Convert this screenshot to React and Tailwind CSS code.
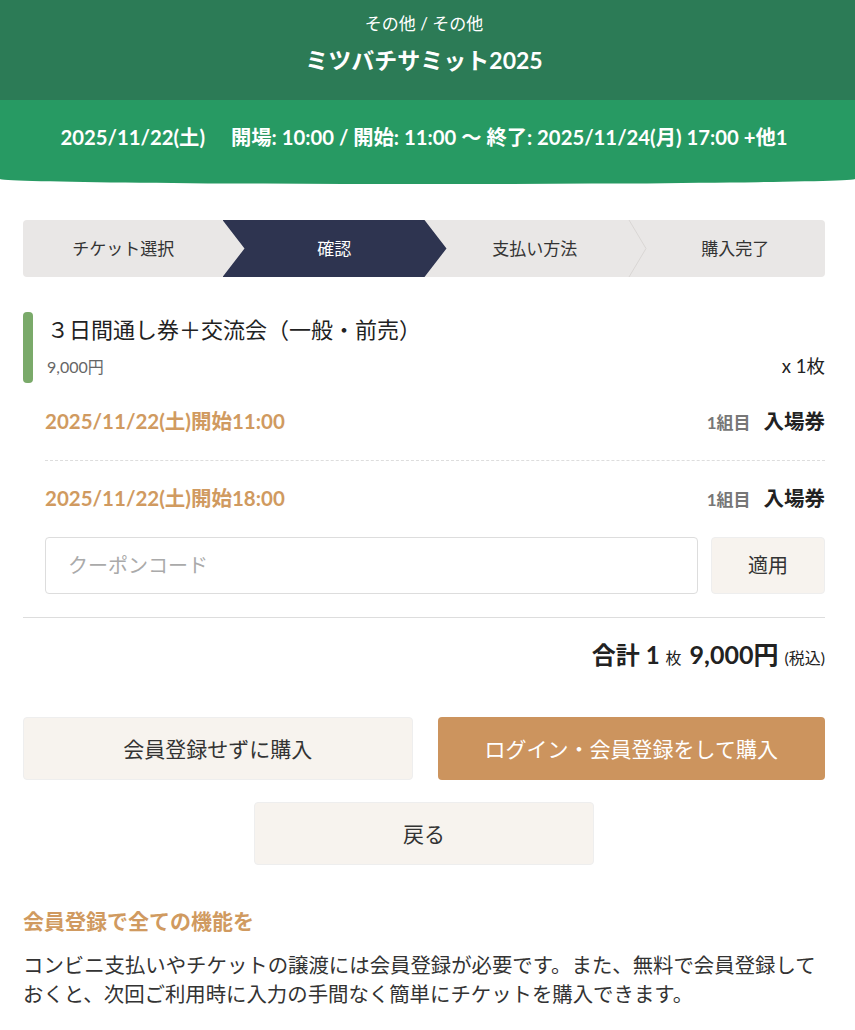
import React from 'react';

const steps = ['チケット選択', '確認', '支払い方法', '購入完了'];

const Stepper = ({ current = 1 }) => (
    <div className="grid h-[57px] grid-cols-4 rounded bg-[#e9e7e6]">
        {steps.map((label, i) => (
            <div key={label} className={`relative flex items-center justify-center ${i > 0 ? 'pl-[21px]' : ''}`}>
                {i === current && (
                    <div className="absolute inset-y-0 left-[-1px] w-[224px] bg-[#2e3450] [clip-path:polygon(0_0,202px_0,100%_50%,202px_100%,0_100%,22px_50%)]" />
                )}
                {i === 3 && (
                    <svg className="absolute left-0 top-0 h-full w-[24px]" viewBox="0 0 24 57" fill="none">
                        <path d="M4 0 L21 28.5 L4 57" stroke="#d9d6d4" strokeWidth="1" />
                    </svg>
                )}
                <span className={`relative text-[17px] ${i === current ? 'text-white' : 'text-[#333]'}`}>{label}</span>
            </div>
        ))}
    </div>
);

const SessionRow = ({ time }) => (
    <div className="flex h-[40px] items-center justify-between">
        <span className="text-[20.5px] font-bold text-[#d09a60]">{time}</span>
        <span className="flex items-baseline gap-[13px]">
            <span className="text-[17px] font-bold text-[#777]">1組目</span>
            <span className="text-[20.5px] font-bold text-[#222]">入場券</span>
        </span>
    </div>
);

export default function App() {
    return (
        <div className="min-h-screen w-[855px] bg-white font-['Lato','Noto_Sans_CJK_JP',sans-serif] text-[#333]">
            <header className="text-white">
                <div className="flex h-[100px] flex-col items-center bg-[#2c7b56] pr-[7px] pt-[11px]">
                    <p className="text-[17px] leading-[26px]">その他 / その他</p>
                    <h1 className="mt-[8px] text-[23px] font-bold leading-[30px]">ミツバチサミット2025</h1>
                </div>
                <div className="flex h-[84px] items-center justify-center rounded-b-[50%_5px] bg-[#279a63] pb-[10px] pr-[7px]">
                    <p className="text-[20.3px] font-bold">
                        2025/11/22(土)<span className="ml-[26px]">開場: 10:00 / 開始: 11:00 〜 終了: 2025/11/24(月) 17:00 +他1</span>
                    </p>
                </div>
            </header>

            <main className="pl-[23px] pr-[30px] pt-[36px]">
                <Stepper current={1} />

                <section className="mt-[35px] flex">
                    <div className="w-[10px] shrink-0 rounded bg-[#7aaa6a]" />
                    <div className="flex-1 pl-[14px] pt-[1px]">
                        <h2 className="text-[22px] leading-[34px] text-[#222]">３日間通し券＋交流会（一般・前売）</h2>
                        <div className="mt-[6px] flex items-center justify-between pb-[2px]">
                            <span className="text-[16px] text-[#666]">9,000円</span>
                            <span className="text-[18.5px] text-[#222]">x 1枚</span>
                        </div>
                    </div>
                </section>

                <div className="ml-[22px] mt-[19px]">
                    <SessionRow time="2025/11/22(土)開始11:00" />
                    <div className="my-[18px] border-t border-dashed border-[#ddd]" />
                    <SessionRow time="2025/11/22(土)開始18:00" />

                    <div className="mt-[18px] flex gap-[13px]">
                        <input
                            type="text"
                            placeholder="クーポンコード"
                            className="h-[57px] flex-1 rounded border border-[#ddd] px-[22px] text-[20px] placeholder:text-[#aaa] focus:outline-none"
                        />
                        <button type="button" className="h-[57px] w-[114px] rounded border border-[#eee] bg-[#f7f3ee] text-[20px] text-[#333]">適用</button>
                    </div>
                </div>

                <div className="mt-[23px] border-t border-[#ddd]" />

                <div className="mt-[18px] flex items-baseline justify-end text-[#222]">
                    <span className="text-[24px] font-bold">合計 1</span>
                    <span className="ml-[6px] text-[16px]">枚</span>
                    <span className="ml-[8px] text-[25px] font-bold">9,000円</span>
                    <span className="ml-[6px] text-[16px]">(税込)</span>
                </div>

                <div className="mt-[44px] flex gap-[25px]">
                    <button type="button" className="h-[63px] flex-1 rounded border border-[#eee] bg-[#f7f3ee] text-[21px] text-[#333]">会員登録せずに購入</button>
                    <button type="button" className="h-[63px] flex-1 rounded bg-[#cc945e] text-[21px] text-white">ログイン・会員登録をして購入</button>
                </div>
                <div className="mt-[22px] flex justify-center">
                    <button type="button" className="h-[63px] w-[340px] rounded border border-[#eee] bg-[#f7f3ee] text-[21px] text-[#333]">戻る</button>
                </div>

                <section className="mt-[41px]">
                    <h3 className="text-[21px] font-bold leading-[30px] text-[#d09a60]">会員登録で全ての機能を</h3>
                    <p className="mt-[15px] text-[20.4px] leading-[29px] text-[#333]">
                        コンビニ支払いやチケットの譲渡には会員登録が必要です。また、無料で会員登録しておくと、次回ご利用時に入力の手間なく簡単にチケットを購入できます。
                    </p>
                </section>
            </main>
        </div>
    );
}
